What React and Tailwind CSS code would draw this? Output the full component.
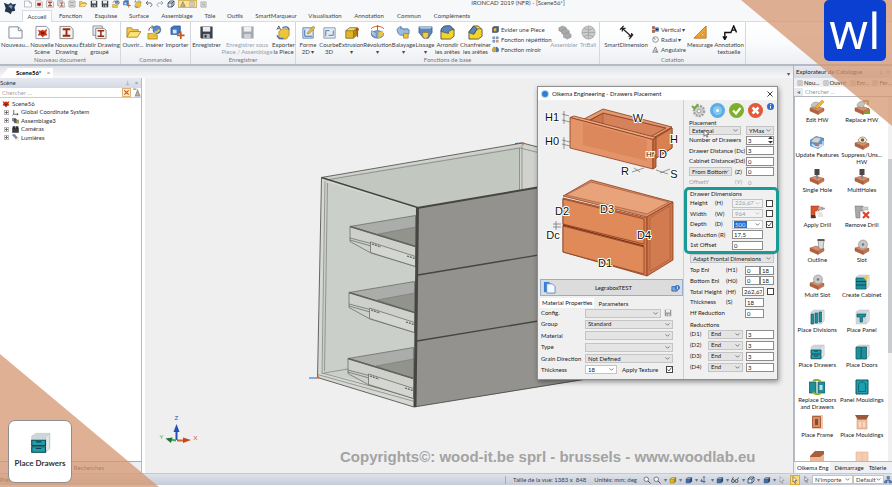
import React, { useState } from 'react';
import clsx from 'clsx';

// ─── Ribbon data ───
const TABS = [
  { name: 'Accueil', w: 'w-[30px]' },
  { name: 'Fonction', w: 'w-[37px]' },
  { name: 'Esquisse', w: 'w-[34px]' },
  { name: 'Surface', w: 'w-[32px]' },
  { name: 'Assemblage', w: 'w-[44px]' },
  { name: 'Tôle', w: 'w-[22px]' },
  { name: 'Outils', w: 'w-[28px]' },
  { name: 'SmartMarqueur', w: 'w-[54px]' },
  { name: 'Visualisation', w: 'w-[44px]' },
  { name: 'Annotation', w: 'w-[44px]' },
  { name: 'Commun', w: 'w-[36px]' },
  { name: 'Compléments', w: 'w-[50px]' },
];

const GROUPS = [
  {
    title: 'Nouveau document',
    w: 'w-[121px]',
    items: [
      { icon: 'page', lines: ['Nouveau...'], w: 'w-[30px]' },
      { icon: 'scene', lines: ['Nouvelle', 'Scène'], w: 'w-[24px]' },
      { icon: 'beam', lines: ['Nouveau', 'Drawing'], w: 'w-[25px]' },
      { icon: 'beams', lines: ['Établir Drawing', 'groupé'], w: 'w-[41px]' },
    ],
  },
  {
    title: 'Commandes',
    w: 'w-[70px]',
    items: [
      { icon: 'folder', lines: ['Ouvrir...'], w: 'w-[24px]' },
      { icon: 'insert', lines: ['Insérer'], w: 'w-[19px]' },
      { icon: 'import', lines: ['Importer'], w: 'w-[26px]' },
    ],
  },
  {
    title: 'Enregistrer',
    w: 'w-[105px]',
    items: [
      { icon: 'save', lines: ['Enregistrer'], w: 'w-[31px]' },
      { icon: 'saveOff', lines: ['Enregistrer sous', 'Piece / Assemblage'], w: 'w-[50px]', off: true },
      { icon: 'export', lines: ['Exporter', 'la Piece'], w: 'w-[23px]' },
    ],
  },
  {
    title: 'Fonctions de base',
    w: 'w-[304px]',
    items: [
      { icon: 'sketch', lines: ['Forme', '2D ▾'], w: 'w-[24px]' },
      { icon: 'curve', lines: ['Courbe', '3D'], w: 'w-[18px]' },
      { icon: 'extrude', lines: ['Extrusion', '▾'], w: 'w-[26px]' },
      { icon: 'revolve', lines: ['Révolution', '▾'], w: 'w-[27px]' },
      { icon: 'sweep', lines: ['Balayage', '▾'], w: 'w-[25px]' },
      { icon: 'loft', lines: ['Lissage', '▾'], w: 'w-[18px]' },
      { icon: 'fillet', lines: ['Arrondir', 'les arêtes'], w: 'w-[27px]' },
      { icon: 'chamfer', lines: ['Chanfreiner', 'les arêtes'], w: 'w-[29px]' },
      {
        list: [
          ['shell', 'Evider une Piece'],
          ['pattern', 'Fonction répétition'],
          ['mirror', 'Fonction miroir'],
        ],
        w: 'w-[60px]',
        pad: 'pl-[2px]',
      },
      { icon: 'assemble', lines: ['Assembler'], w: 'w-[28px]', off: true },
      { icon: 'triball', lines: ['TriBall'], w: 'w-[20px]', off: true },
    ],
  },
  {
    title: 'Cotation',
    w: 'w-[146px]',
    items: [
      { icon: 'dimension', lines: ['SmartDimension'], w: 'w-[52px]' },
      {
        list: [
          ['vertical', 'Vertical  ▾'],
          ['radial', 'Radial ▾'],
          ['angle', 'Angulaire'],
        ],
        w: 'w-[34px]',
        pad: 'pl-0',
      },
      { icon: 'ruler', lines: ['Mesurage'], w: 'w-[28px]' },
      { icon: 'note', lines: ['Annotation', 'textuelle'], w: 'w-[30px]' },
    ],
  },
];

// ─── Catalogue data ───
const CATALOG = [
  ['editHw', 'Edit HW'],
  ['replaceHw', 'Replace HW'],
  ['update', 'Update Features'],
  ['suppress', 'Suppress/Uns...', 'HW'],
  ['hole', 'Single Hole'],
  ['hole', 'MultiHoles'],
  ['drill', 'Apply Drill'],
  ['drillOff', 'Remove Drill'],
  ['outline', 'Outline'],
  ['slot', 'Slot'],
  ['slot', 'Multi Slot'],
  ['cabinet', 'Create Cabinet'],
  ['divisions', 'Place Divisions'],
  ['panel', 'Place Panel'],
  ['drawers', 'Place Drawers'],
  ['doors', 'Place Doors'],
  ['replaceDoors', 'Replace Doors', 'and Drawers'],
  ['mouldPanel', 'Panel Mouldings'],
  ['frame', 'Place Frame'],
  ['mouldings', 'Place Mouldings'],
  ['worktop', ''],
  ['plain', ''],
];

const TREE = [
  ['axes', 'Global Coordinate System'],
  ['parts', 'Assemblage3'],
  ['camera', 'Caméras'],
  ['light', 'Lumières'],
];

// ─── Icon drawings, all on a 16x16 grid ───
const Board = () => (
  <g stroke="#8a4a2c" strokeWidth=".4">
    <path d="M1 9 7 7l8 2.500-6 3z" fill="#d98e68" />
    <path d="M1 9v3l8 3.500v-3z" fill="#b5633f" />
    <path d="M9 12.500v3l6-3.500V9.500z" fill="#c87650" />
  </g>
);

const Box = ({ fill = '#e3b526', side = '#b8860b', top = '#f6dc68' }) => (
  <g stroke="#6a5a20" strokeWidth=".5">
    <path d="M2 6 6 3h8v8l-4 3H2z" fill={side} />
    <path d="M2 6h8v8H2z" fill={fill} />
    <path d="M2 6 6 3h8l-4 3z" fill={top} />
  </g>
);

const Carcass = () => (
  <g stroke="#b9c2c4" strokeWidth=".5">
    <path d="M2 3 5 1h10v11l-3 3H2z" fill="#cdd6d8" />
    <path d="M12 3.500V15l3-3V1z" fill="#dfe5e6" />
  </g>
);

const ICONS = {
  page: <path d="M1 2h10l4 4v8H1zM11 2v4h4" fill="#fbfcfe" stroke="#7e8794" />,
  scene: (
    <>
      <path d="M1 1.500h11l3 3v10H1z" fill="#fbfcfe" stroke="#8c93a0" />
      <path d="m3 5 3 1 2-1 2 1 3-2-1 4 1 3-3 .5L8 13l-2-2-3 .5L4.500 8z" fill="#cf3518" />
      <path d="m6 6 2 2 2-1v3H7z" fill="#7a1c10" />
    </>
  ),
  spider: (
    <>
      <path d="m1 2 4 2 3-1 3 1 4-2-2 5 2 4-4 .5L8 15l-3-3.500-4-.5 2-4z" fill="#cf3518" />
      <path d="m5 6 3 2 3-2-1 5H6z" fill="#7a1c10" />
    </>
  ),
  beam: (
    <>
      <path d="M1 1.500h11l3 3v10H1z" fill="#f4f1ee" stroke="#8c8580" />
      <path d="M4 4.500h8M4 11.500h8M8 5v6" stroke="#9a2a18" strokeWidth="2" />
    </>
  ),
  beams: (
    <>
      <path d="M1 1h10v10H1z" fill="#e8eaee" stroke="#8c93a0" />
      <path d="M4 3.500h9l2 2v9H4z" fill="#f8f6f4" stroke="#8c8580" />
      <path d="M6 6h7M6 12h7M9.500 6.500v5" stroke="#9a2a18" strokeWidth="1.600" />
    </>
  ),
  folder: (
    <>
      <path d="M1 13V3h5l1 2h6v3" fill="#f2cc52" stroke="#9a7a1c" strokeWidth=".8" />
      <path d="M1 13 4 7h12l-4 6z" fill="#ffe07a" stroke="#9a7a1c" strokeWidth=".8" />
    </>
  ),
  insert: (
    <>
      <circle cx="10.500" cy="5" r="4.200" fill="#5a88c4" stroke="#345a8c" strokeWidth=".6" />
      <path d="M1 9h5l2 1.500h3V15H1z" fill="#f0c33c" stroke="#8a6a10" strokeWidth=".6" />
      <path d="M2 6c0-3 2-4 4-4M5 .5 7 2 5 4" fill="none" stroke="#4a4f58" />
      <path d="M8 8c2 0 4-1 5-3" stroke="#f0c33c" strokeWidth="2" fill="none" />
    </>
  ),
  import: (
    <>
      <path d="M1 3 4 1h7v7l-3 2H1z" fill="#3d78c4" stroke="#1e4a88" strokeWidth=".7" />
      <path d="M3 5h4v4H3z" fill="#d4e4f6" />
      <path d="M11.500 7v8M7.500 11h8" stroke="#c4561e" strokeWidth="1.800" />
    </>
  ),
  save: (
    <>
      <path d="M1.500 1.500h13v13h-12l-1-1z" fill="#3c4148" />
      <path d="M4 2h8v5H4z" fill="#e9edf2" />
      <path d="M4.500 9.500h7v5h-7z" fill="#aab2bc" />
      <path d="M6 10.500h2v3H6z" fill="#30343a" />
    </>
  ),
  saveOff: (
    <>
      <path d="M1.500 1.500h13v13h-12l-1-1z" fill="#a5a9ae" />
      <path d="M4 2h8v5H4z" fill="#eef0f2" />
      <path d="M4.500 9.500h7v5h-7z" fill="#cfd3d7" />
    </>
  ),
  export: (
    <>
      <path d="m3 7 4-3h7v7l-3 4H3z" fill="#f0c33c" stroke="#8a6a10" strokeWidth=".6" />
      <path d="M1 5 3 1l2 4M2 4h2" stroke="#333" fill="none" strokeWidth=".8" />
      <path d="M7 3c3-2 6-1 7 2M1 11c1 3 4 4 7 3" stroke="#3a72c0" strokeWidth="1.400" fill="none" />
    </>
  ),
  sketch: (
    <>
      <path d="M2 3h11v11H2z" fill="#dbe9f7" stroke="#5c82b0" />
      <path d="M4 12h8M4 12V5" stroke="#3f6aa0" />
      <path d="m7 8 6-7 2 2-6 6-2 .5z" fill="#eab83a" stroke="#8a6a10" strokeWidth=".5" />
    </>
  ),
  curve: (
    <>
      <path d="M2 3h12v11H2z" fill="#e4ebf3" stroke="#8b9bb0" />
      <path d="M4 12V6h4M7 11h5V6" stroke="#4a78b0" fill="none" />
    </>
  ),
  extrude: (
    <>
      <Box />
      <path d="M14.500 13V4m-1.500 2 1.500-3L16 6" stroke="#b03a18" fill="none" />
    </>
  ),
  revolve: (
    <>
      <ellipse cx="8" cy="10" rx="6.500" ry="4" fill="#7fa6d4" stroke="#41658e" strokeWidth=".7" />
      <path d="M1.500 6v4l5 3.500V8z" fill="#a8c4e4" stroke="#41658e" strokeWidth=".5" />
      <path d="M9 8v6l5-3V6z" fill="#f0c33c" />
      <path d="M1 4c4-3.500 10-3.500 14 0M8 0v6" stroke="#c4561e" fill="none" />
    </>
  ),
  sweep: (
    <>
      <path d="M1 5c2-4 5-4 7 0h6v4l-3 2H6c-3 0-4-2-5-6z" fill="#9bbce0" stroke="#41658e" strokeWidth=".7" />
      <path d="M8 9h5v5H8z" fill="#f0c33c" stroke="#8a6a10" strokeWidth=".6" />
      <path d="M5 1v3h8" stroke="#6a8cb4" fill="none" />
    </>
  ),
  loft: (
    <>
      <path d="M1 2h14v6l-4 6H6L1 8z" fill="#5b86bc" stroke="#2d4f7c" strokeWidth=".7" />
      <path d="M1 2h14l-2 2H3z" fill="#a8c4e4" />
      <path d="M5 8h6v4l-3 3-3-3z" fill="#f4cf3c" stroke="#8a6a10" strokeWidth=".5" />
    </>
  ),
  fillet: (
    <>
      <path d="M1 7c0-4 3-6 6-6h4l4 4v7l-4 3H1z" fill="#f6d32c" stroke="#3a3a30" strokeWidth=".8" />
      <path d="M1 7c0-4 3-6 6-6h4l4 4c-3 0-6 1-6 4z" fill="#5b86bc" stroke="#2b3a4c" strokeWidth=".6" />
    </>
  ),
  chamfer: (
    <>
      <path d="M1 7 6 1h5l4 4v7l-4 3H1z" fill="#f6d32c" stroke="#3a3a30" strokeWidth=".8" />
      <path d="M1 8 6 1l4 3-4 6z" fill="#5b86bc" stroke="#2b3a4c" strokeWidth=".6" />
      <path d="m6 10 4-6h5" stroke="#3a3a30" strokeWidth=".5" fill="none" />
    </>
  ),
  shell: (
    <>
      <path d="M1 4 4 1h11v11l-3 3H1z" fill="#3d5f8c" stroke="#1c2c44" />
      <path d="M4 5h6v7H4z" fill="#e8b53a" />
    </>
  ),
  pattern: (
    <g fill="#dce8f6" stroke="#34629c" strokeWidth="1.500">
      <path d="M2 2h4v4H2zM10 2h4v4h-4zM2 10h4v4H2z" />
      <path d="M10 10h4v4h-4z" stroke="#b05a28" />
    </g>
  ),
  mirror: (
    <>
      <path d="M1 7 4 3h3v10H4L1 12z" fill="#e8b53a" stroke="#6a5210" />
      <path d="M15 7 12 3H9v10h3l3-1z" fill="#4e7cb8" stroke="#24446c" />
    </>
  ),
  assemble: (
    <g fill="#a9a9a9" stroke="#8c8c8c" strokeWidth=".6">
      <path d="m2 3 4-2 4 2v3l-4 2-4-2z" />
      <path d="m5 6 4-2 4 2v3l-4 2-4-2z" />
      <path d="m7 10 4-2 4 2v3l-4 2-4-2z" />
    </g>
  ),
  triball: (
    <>
      <circle cx="8" cy="8" r="7" fill="#c9c9c9" stroke="#a6a6a6" strokeWidth=".8" />
      <path d="M8 1v14M1 8h14M3 3c3 3 7 3 10 0M3 13c3-3 7-3 10 0" stroke="#9c9c9c" strokeWidth=".7" fill="none" />
    </>
  ),
  dimension: (
    <path d="m1 5 4-4M11 15l4-5M4 4l9 8M3.500 7V3.500H7M13.500 8.500V12H10" stroke="#222" fill="none" strokeWidth="1.300" />
  ),
  vertical: (
    <>
      <path d="M1 1h5v5H1zM1 9h5v6H1z" fill="#c8623a" stroke="#6c2c14" />
      <path d="M8 4h7v8H8z" fill="#5b86bc" stroke="#24446c" />
      <path d="M9 8h5" stroke="#111" strokeWidth="2" />
    </>
  ),
  radial: (
    <>
      <circle cx="8" cy="8" r="6.500" fill="#f4f4f4" stroke="#555" strokeWidth="1.300" />
      <path d="M8 8 3 4" stroke="#444" strokeWidth="1.500" />
    </>
  ),
  angle: <path d="M1 14h13M2 14 8 2l5 12M5 9c3-1 4 1 5 5" stroke="#444" strokeWidth="1.300" fill="none" />,
  ruler: (
    <>
      <path d="M1 14 14 1v13z" fill="#f2a52c" stroke="#a0601c" strokeWidth=".8" />
      <path d="M8 11.500 11.500 8v3.500z" fill="#fff6e4" stroke="#a0601c" strokeWidth=".6" />
    </>
  ),
  note: (
    <>
      <path d="M3 15V8h7M1 12l2 3.500L5 12" stroke="#111" fill="none" strokeWidth="1.500" />
      <path d="m9.500 8 3-7 3 7M10.500 5.500h4" stroke="#111" fill="none" strokeWidth="1.500" />
    </>
  ),
  editHw: (
    <>
      <Board />
      <path d="M2 7c1-4 5-5 8-3l-3 5z" fill="#c6c2bc" stroke="#777" strokeWidth=".4" />
      <path d="m7 7 6-6 2 2-6 6-2.500.5z" fill="#f0b53a" stroke="#9a6a10" strokeWidth=".4" />
    </>
  ),
  replaceHw: (
    <>
      <Board />
      <path d="M3 7c0-4 5-6 8-3l-2 5z" fill="#c6c2bc" stroke="#777" strokeWidth=".4" />
      <path d="M9 2h5v4M15 10v4h-5" stroke="#7da02e" strokeWidth="2" fill="none" />
    </>
  ),
  update: (
    <>
      <path d="M1 6 7 2l8 2v7l-6 4-8-3z" fill="#5e93cf" />
      <path d="M2 8c2-5 7-6 10-3l-3 4z" fill="#d5d3cf" stroke="#777" strokeWidth=".4" />
      <path d="M3 10c3 4 8 4 11 0M14 7v4h-4" stroke="#cfe2f6" strokeWidth="1.300" fill="none" />
      <path d="m6 9 4 1-3 2z" fill="#c87650" />
    </>
  ),
  suppress: (
    <>
      <Board />
      <path d="M4 6c2-4 7-4 9 0-2 4-7 4-9 0z" fill="#f2efe6" stroke="#8c7a4c" strokeWidth=".7" />
      <circle cx="8.500" cy="6" r="1.800" fill="#7a5a34" />
    </>
  ),
  hole: (
    <>
      <Board />
      <path d="M5.500 0h5v6h-5z" fill="#4a4644" />
      <path d="M7 6h2v4H7z" fill="#8c8886" />
    </>
  ),
  drill: (
    <>
      <path d="M2 2h8v5H6v7H2z" fill="#e0542c" stroke="#8a2c14" strokeWidth=".5" />
      <path d="M9 3h5v3H9zM13 4h3v1h-3z" fill="#b8b8b8" stroke="#777" strokeWidth=".3" />
      <path d="M2 11h4l1 3H2z" fill="#403c3a" />
      <path d="m8 6 6 3v4H9z" fill="#e8e4e0" />
    </>
  ),
  drillOff: (
    <>
      <path d="M1 2h8v5H6v7H2z" fill="#a8a8a8" stroke="#6c6c6c" strokeWidth=".5" />
      <path d="M8 3h6v3H8z" fill="#cfcfcf" stroke="#777" strokeWidth=".3" />
      <path d="m9 8 6 6M15 8l-6 6" stroke="#d9442c" strokeWidth="2.200" />
    </>
  ),
  outline: (
    <>
      <Board />
      <path d="M9 1h6l-1 9h-4z" fill="#dcdcdc" stroke="#6e6e6e" strokeWidth=".6" />
      <path d="M8.500 0h7v2h-7z" fill="#5a5a5a" />
    </>
  ),
  slot: (
    <>
      <Board />
      <circle cx="9" cy="5.500" r="4.500" fill="#c9c9c9" stroke="#8a8a8a" strokeWidth=".6" />
      <circle cx="9" cy="5.500" r="1.300" fill="#777" />
    </>
  ),
  cabinet: (
    <>
      <Carcass />
      <path d="M2 4h10v11H2z" fill="#1f8f9a" stroke="#0e5660" strokeWidth=".7" />
      <path d="M2 7.500h10M2 11h10" stroke="#0c4852" />
      <path d="m12 1 1 2 2 1-2 1-1 2-1-2-2-1 2-1z" fill="#f2c83a" />
    </>
  ),
  divisions: (
    <>
      <Carcass />
      <path d="M2 5h2.500v10H2zM6 4h2.500v10H6zM10 3h2.500v10H10z" fill="#1f8f9a" stroke="#0e5660" strokeWidth=".6" />
    </>
  ),
  panel: (
    <>
      <Carcass />
      <path d="M3 5h9l-1 3H8.500v5H6V8H3z" fill="#1f8f9a" stroke="#0e5660" strokeWidth=".6" />
    </>
  ),
  drawers: (
    <>
      <Carcass />
      <path d="M2 6h10v3.800H2zM2 10.700h10v4H2z" fill="#1c9fae" stroke="#0c4852" strokeWidth=".8" />
      <path d="M5 7.200h4M5 12h4" stroke="#0c4852" strokeWidth=".8" />
    </>
  ),
  doors: (
    <>
      <Carcass />
      <path d="M2 3h5v12H2zM7.500 3h5v12h-5z" fill="#1f8f9a" stroke="#0e5660" strokeWidth=".7" />
    </>
  ),
  replaceDoors: (
    <>
      <path d="M0 3h7v11H0zM9 3h7v11H9z" fill="#1f8f9a" stroke="#0e5660" strokeWidth=".7" />
      <path d="M10.500 6h3v5h-3z" fill="#bfe0e4" />
      <path d="M4 2c3-2 6-1 8 1M12 14c-3 2-6 1-8-1" stroke="#8ab02e" strokeWidth="2" fill="none" />
    </>
  ),
  mouldPanel: (
    <>
      <path d="M2 1h12v14H2z" fill="#1c9fae" stroke="#0e5660" />
      <path d="M4.500 12.500V6c0-4 7-4 7 0v6.500z" fill="none" stroke="#0c6672" strokeWidth=".9" />
    </>
  ),
  frame: (
    <>
      <path d="M3 1h11v14H3z" fill="#f0c9ae" />
      <path d="M3.500 2.500h8v11h-8z" fill="#d98e68" stroke="#a8603c" />
      <path d="M6 5h3v6H6z" fill="#8a4a2c" />
    </>
  ),
  mouldings: (
    <>
      <path d="M3 5h10v10H3z" fill="#f0c0a0" stroke="#c88c68" strokeWidth=".5" />
      <path d="M1 1h14l-2.500 4.500h-9z" fill="#9a5a3a" />
      <path d="M5 8h2v5H5zM9 8h2v5H9z" fill="#f8dcc8" />
    </>
  ),
  worktop: (
    <>
      <path d="M1 7 6 2h9v4l-4 3H1z" fill="#a8603c" />
      <path d="M1 8h10l4-3v10H1z" fill="#eeb898" />
    </>
  ),
  plain: <path d="M2 3h12v12H2zM8 3v12" fill="#f4ccb0" stroke="#e4b090" strokeWidth=".6" />,
  axes: <path d="M4 2v10h10M4 12l-3 3M11 10l3 2-3 2" stroke="#333" fill="none" strokeWidth="1.600" />,
  parts: (
    <>
      <path d="M1 3h7v6H1z" fill="#9a9a90" stroke="#444" />
      <path d="M5 5h5v8H5z" fill="#3e6ca8" stroke="#222" />
      <path d="M10 7h5v7h-5z" fill="#c8a83a" stroke="#555" />
    </>
  ),
  camera: <path d="M1 5h14v10H1zM2 1h5v4H2zM9 1h5v4H9z" fill="#3c3c3c" stroke="#222" />,
  light: (
    <>
      <path d="m1 2 5-1 6 7-3 3z" fill="#7890b8" stroke="#3a4a6c" />
      <path d="m11 10 4 5M9 12v3M13 9h3" stroke="#c89a3a" />
    </>
  ),
  ironcad: (
    <>
      <path d="m1 2 5 2 3-2 2 2 4-1-2 4 1 4-4 1-1 3-3-2-4-1 1-4z" fill="#22344e" />
      <path d="m6 6 3-2 2 2-1 3z" fill="#7d95b4" />
    </>
  ),
  glass: (
    <>
      <circle cx="6.500" cy="6.500" r="4.500" fill="#f4f8fc" stroke="#555" strokeWidth="1.500" />
      <path d="m10 10 5 5" stroke="#555" strokeWidth="2" />
    </>
  ),
  blueBox: <Box fill="#3b6cb4" side="#244a84" top="#8fb2e0" />,
  goldBox: <Box />,
  wireBox: <path d="M2 6 6 2h8v8l-4 4H2zM2 6h8v8M10 6l4-4" stroke="#2c3c54" strokeWidth="1.600" fill="#dbe4f0" />,
  move: <path d="M8 1v14M3 6v5h8M1 9l2 2.500L5 9M6 3l2-2 2 2" stroke="#3a587e" strokeWidth="1.500" fill="none" />,
  specs: (
    <g stroke="#333" strokeWidth="1.500" fill="none">
      <circle cx="4" cy="10" r="3" />
      <circle cx="11" cy="10" r="3" />
      <path d="m2 7 3-5M13 7l2-4" />
    </g>
  ),
  cursor: <path d="m4 1 8 8H8l2 5-2 1-2-5-2 2z" fill="#fff" stroke="#444" strokeWidth="1.200" />,
  net: <path d="M6 1h5v4H6zM1 10h5v4H1zM10 10h5v4h-5zM8.500 5v3M3.500 10V8h9v2" stroke="#34507c" fill="#6c90c8" />,
  undo: <path d="M3 6h7c5 0 5 7 0 7M6 2 2 6l4 4" stroke="#666f7a" strokeWidth="2" fill="none" />,
  redo: <path d="M13 6H6c-5 0-5 7 0 7M10 2l4 4-4 4" stroke="#a4aab2" strokeWidth="2" fill="none" />,
  list: <path d="M2 2h12v12H2zM4 5h8M4 8h8M4 11h8" stroke="#666" fill="#f4f4f4" />,
};

const Icon = ({ name, className = 'h-3.5 w-3.5' }) => (
  <svg viewBox="0 0 16 16" className={clsx('shrink-0', className)} fill="none" aria-hidden="true">
    {ICONS[name]}
  </svg>
);

// ─── Form controls ───
const Select = ({ label, value, className, disabled, selected, light }) => (
  <div className={clsx('relative h-[9px] shrink-0', className)}>
    <select
      aria-label={label}
      disabled={disabled}
      className={clsx(
        'block h-full w-full appearance-none border border-[#c4c4c4] pl-[2px] leading-none outline-none',
        disabled && 'bg-[#f2f2f2] text-gray-400',
        selected && 'bg-white text-[#2a6fd0]',
        light && 'bg-white',
        !disabled && !selected && !light && 'bg-[#e4e4e4]',
      )}
    >
      <option>{value}</option>
    </select>
    {selected && (
      <span className="pointer-events-none absolute top-px bottom-px left-[2px] bg-[#2a6fd0] px-px leading-[7px] text-[#cfe2ff]">
        {value}
      </span>
    )}
    <svg viewBox="0 0 6 4" className="pointer-events-none absolute top-[3px] right-[3px] h-[3px] w-[5px]" fill="none">
      <path d="m.5.5 2.500 2.500L5.500.5" stroke={disabled ? '#bbb' : '#555'} />
    </svg>
  </div>
);

const Field = ({ label, value, className, flat }) => (
  <input
    aria-label={label}
    defaultValue={value}
    className={clsx(
      'h-[9px] shrink-0 border px-px leading-none outline-none',
      flat ? 'border-transparent bg-transparent text-gray-400' : 'border-[#8c8c8c] bg-white',
      className,
    )}
  />
);

const Check = ({ label, checked }) => (
  <span className="relative ml-[3px] h-[7px] w-[7px] shrink-0">
    <input
      type="checkbox"
      aria-label={label}
      defaultChecked={checked}
      className="peer block h-full w-full appearance-none border border-[#444] bg-white"
    />
    <svg viewBox="0 0 7 7" className="pointer-events-none absolute inset-0 hidden peer-checked:block" fill="none">
      <path d="m1.500 3.500 1.500 1.500 2.500-3.500" stroke="#333" strokeWidth=".8" />
    </svg>
  </span>
);

// One line of the right hand column: name, symbol, then its control
const Row = ({ name, symbol, nameW = 'w-[36px]', off, children }) => (
  <div className={clsx('flex h-[10px] items-center whitespace-nowrap', off && 'text-gray-400')}>
    <span className={clsx('shrink-0', nameW)}>{name}</span>
    <span className={clsx('min-w-0 flex-1', nameW === 'w-auto' && 'pr-px text-right')}>{symbol}</span>
    {children}
  </div>
);

// ─── Ribbon ───
const RibbonItem = ({ item }) => {
  if (item.list) {
    return (
      <div className={clsx('flex shrink-0 flex-col gap-px pt-[2px]', item.w, item.pad)}>
        {item.list.map(([icon, text]) => (
          <button key={text} className="flex h-[9px] items-center gap-[2px] whitespace-nowrap">
            <Icon name={icon} className="h-[7px] w-[7px]" />
            {text}
          </button>
        ))}
      </div>
    );
  }
  return (
    <button className={clsx('flex shrink-0 flex-col items-center pt-[2px] leading-[7px]', item.w, item.off && 'text-gray-400')}>
      <Icon name={item.icon} className="mb-px h-[15px] w-[15px]" />
      {item.lines.map((line) => (
        <span key={line} className="whitespace-nowrap">{line}</span>
      ))}
    </button>
  );
};

const QAT = ['page', 'scene', 'beam', 'beams', 'list', 'folder', 'save', 'save', 'insert', 'import', 'export', 'undo', 'redo', 'wireBox'];

const Ribbon = () => {
  const [active, setActive] = useState('Accueil');
  return (
    <header className="shrink-0 bg-[#f7f8f9] text-[#444]">
      <div className="flex h-[10px] items-start">
        <div className="flex w-[200px] items-center gap-[3px] pl-[24px]">
          {QAT.map((name, i) => (
            <Icon key={i} name={name} className="-mt-px h-[8px] w-[8px]" />
          ))}
          <span className="flex gap-[3px] border border-[#d8b85c] bg-[#fbe19a] px-px">
            <Icon name="angle" className="h-[6px] w-[6px]" />
            <Icon name="list" className="h-[6px] w-[6px]" />
          </span>
          <Icon name="list" className="h-[7px] w-[7px]" />
        </div>
        <h1 className="flex-1 pr-[56px] text-center leading-[6px]">IRONCAD 2019 (NFR) - [Scene56*]</h1>
      </div>
      <nav className="flex h-3 items-stretch border-b border-[#d9dce0]">
        <div className="w-[22px]">
          <Icon name="ironcad" className="-mt-[9px] ml-[3px] h-[14px] w-[14px]" />
        </div>
        {TABS.map((tab) => (
          <button
            key={tab.name}
            onClick={() => setActive(tab.name)}
            className={clsx(
              'shrink-0 text-center whitespace-nowrap',
              tab.w,
              active === tab.name && '-mb-px border-x border-t border-[#d9dce0] bg-white',
            )}
          >
            {tab.name}
          </button>
        ))}
      </nav>
      <div className="flex h-[44px] border-b-2 border-[#b4bac4] bg-gradient-to-b from-white via-[#fafbfc] to-[#eceef2]">
        {GROUPS.map((group) => (
          <section key={group.title} className={clsx('flex shrink-0 flex-col border-r border-[#d4d8de] pt-px', group.w)}>
            <div className="flex min-h-0 flex-1 items-start">
              {group.items.map((item, i) => (
                <RibbonItem key={i} item={item} />
              ))}
            </div>
            <h2 className="shrink-0 pb-px text-center leading-[7px] text-[#777]">{group.title}</h2>
          </section>
        ))}
      </div>
    </header>
  );
};

// ─── Scene browser ───
const ScenePanel = () => (
  <aside className="flex w-[142px] shrink-0 flex-col border-r border-[#b4b8c0] bg-[#eef0f4] text-[#333]">
    <div className="flex h-[10px] items-center bg-gradient-to-b from-[#e6e9f0] to-[#d3d9e5]">
      <h2 className="flex-1">Scène</h2>
      <button aria-label="Épingler" className="w-[9px] text-gray-500">⊥</button>
      <button aria-label="Fermer la scène" className="w-[9px] text-gray-500">×</button>
    </div>
    <div className="flex h-[10px] items-center gap-px border-b border-[#ccc] bg-white">
      <input placeholder="Chercher ..." aria-label="Chercher dans la scène" className="h-full min-w-0 flex-1 px-[2px] outline-none" />
      <button aria-label="Effacer" className="h-[9px] w-[9px] border border-[#e0b070] bg-[#fdebc8]">
        <svg viewBox="0 0 8 8" fill="none"><path d="m1.500 1.500 5 5m0-5-5 5" stroke="#c4561e" strokeWidth="1.300" /></svg>
      </button>
      <button aria-label="Filtrer" className="h-[9px] w-[9px]">
        <svg viewBox="0 0 8 8" fill="none"><path d="M1 1h3M3 7l2-5 2 5z" stroke="#8a97a8" fill="#d5b65c" /></svg>
      </button>
    </div>
    <div className="flex flex-1 flex-col border-b border-[#aab] bg-white pt-px">
      <div className="flex h-[9px] items-center gap-[2px] pl-[2px]">
        <Icon name="spider" className="h-[8px] w-[8px]" />
        Scene56
      </div>
      <ul className="flex h-[34px] flex-col justify-between">
        {TREE.map(([icon, name]) => (
          <li key={name} className="flex h-[8px] items-center pl-[4px]">
            <button aria-label={'Ouvrir ' + name} className="mr-[3px] grid h-[5px] w-[5px] place-items-center border border-[#bbb] leading-none text-gray-500">
              <svg viewBox="0 0 3 3" className="h-[3px] w-[3px]"><path d="M0 1.500h3M1.500 0v3" stroke="#555" strokeWidth=".8" /></svg>
            </button>
            <Icon name={icon} className="mr-[2px] h-[7px] w-[7px]" />
            {name}
          </li>
        ))}
      </ul>
    </div>
    <div className="flex h-[11px] items-center justify-end gap-[2px] pr-[37px]">
      <Icon name="glass" className="h-[6px] w-[6px]" />
      Recherches
    </div>
  </aside>
);

// ─── 3D view ───
const DrawerBox = ({ dx, dy }) => (
  <g transform={`translate(${dx} ${dy})`} stroke="#62635f" strokeWidth=".7" fill="none">
    <path d="m350 226.500 65.500-11V247z" fill="#abadaa" />
    <path d="m378 234 37.500-7v20z" fill="#93938e" strokeWidth=".4" />
    <path d="m350 226.500 65.500 20v20L371 253l-21-11.500z" fill="#cdd0cb" />
    <path d="m350 226.500 65.500 20" strokeWidth="1.600" />
    <path d="m350 238 21 5.500M350 240l21 6" />
    <path d="m370.500 242 45 14.500v10l-45-14z" fill="#d3d6d1" />
    <path d="m372 244 9 3M407 256l8 2.500" strokeWidth="1.300" strokeDasharray="2 1" />
  </g>
);

const Viewport = () => (
  <svg className="absolute inset-0 h-full w-full" aria-label="Vue 3D">
    <g transform="translate(-145 -78)">
      <path d="m321.500 177.500 201-34.500 80 20v45L417 207l-95.500-29.500" fill="#cfd2cd" />
      <path d="m330 178.500 190-32v43.500L417 207z" fill="#c2c7c0" />
      <path d="m321.500 177.500 96 30L414 407l-96.500-29.500z" fill="#d5d8d3" />
      <path d="m326 182 91.500 27v183L322.500 373z" fill="#cbcfc9" />
      <g fill="none" stroke="#7b7c78" strokeWidth=".7">
        <path d="m325 181-3 193M327.500 183l-3 188M324 373l24-4M317.500 374.500l97 27M322 373l93 25" />
        <path d="m326 180 194-32M522 145v44M519.500 148v42M520 148l80 20" />
      </g>
      <DrawerBox dx={0} dy={0} />
      <DrawerBox dx={-1} dy={66} />
      <DrawerBox dx={-2} dy={132} />
      <path d="m418 208 187-32v200.500L414 407z" fill="#93928f" />
      <g fill="none" stroke="#454541">
        <path d="m321.500 177.500 201-34.500 80 21" strokeWidth=".8" />
        <path d="m321.500 177.500-4 200 96.500 29.500 191-31" strokeWidth=".8" />
        <path d="m321.500 177.500 96 30" strokeWidth="1.400" />
        <path d="m418 275 187-31M417 341l188-31" strokeWidth="1.300" />
        <path d="m417 208 188-32" strokeWidth="2" />
        <path d="M417.500 207 415 407" strokeWidth="3" />
      </g>
      <path d="M309 378h8M515 143.500l7-.5" stroke="#2a62c8" />
      <circle cx="318" cy="377.500" r="1.300" fill="#d9662a" />
      <circle cx="523" cy="143.500" r="1.300" fill="#d9662a" />
      {/* axis triad */}
      <path d="M176.500 440v-9" stroke="#2450b4" strokeWidth="2" />
      <path d="m173.500 432 3-8 3 8z" fill="#2450b4" />
      <path d="M177 440.500h7" stroke="#d4622c" strokeWidth="2" />
      <path d="m183 437.500 8 2.500-8 3z" fill="#c04a1c" />
      <path d="M176 440.500l-6-1" stroke="#3cae5c" strokeWidth="2" />
      <path d="m171 443-5.500-4.500 7-1z" fill="#23703a" />
      <text x="174.500" y="420" fontSize="6" fill="#2450b4">Z</text>
      <text x="193.500" y="440" fontSize="6" fill="#d4622c">X</text>
      <text x="159.500" y="438.500" fontSize="6" fill="#3cae5c">Y</text>
    </g>
  </svg>
);

// ─── Dialog illustrations ───
const MARKS = [
  [552, 121, 'H1'], [552, 145, 'H0'], [638, 122, 'W'], [674, 143, 'H'], [663, 158, 'D'],
  [625, 175, 'R'], [674, 178, 'S'], [562, 215, 'D2'], [607, 213, 'D3'], [644, 239, 'D4'],
  [553, 239, 'Dc'], [605, 267, 'D1'],
];

const Illustration = () => (
  <svg viewBox="540 100 143 179" className="h-[179px] w-[143px]" aria-label="Dimensions du tiroir">
    <g stroke="#8c3f20" strokeWidth=".8" strokeLinejoin="round">
      <path d="m586 119 17-9 69 18v20l-19 12-67-20z" fill="#d07c54" />
      <path d="m603 113 66 16-16 9-64-17z" fill="#cb764c" />
      <path d="M603 113v12l50 13 16-9z" fill="#d5825a" strokeWidth=".4" />
      <path d="m584 119 19-10 69 18-19 11-3-1 16-9-63-15-15 8z" fill="#e39a70" />
      <path d="M653 139.500 672 128v20l-19 12z" fill="#d8804f" />
      <path d="m570 117.500 4-1.500 82 21.500-3 2z" fill="#eba880" />
      <path d="m570 117.500 83 22V169l-83-21z" fill="#e39468" />
      <path d="m653 139.500 3-2V167l-3 2z" fill="#c46c42" />
    </g>
    <path d="m583 123 64 17v21l-64-16z" fill="#dc875c" />
    <g stroke="#8c3f20" strokeWidth=".8" strokeLinejoin="round">
      <path d="m563 196 28-16 82 22-26 15z" fill="#dd9068" />
      <path d="m566 195 25-13 78 20-22 12z" fill="#e8a37b" strokeWidth=".5" />
      <path d="m563 198 84 20v58l-84-24z" fill="#d97e50" />
      <path d="m647 217 26-15v58l-26 16z" fill="#cc744a" />
      <path d="m650 218 20-12v53l-20 12z" fill="#d27a50" strokeWidth=".3" />
      <path d="m563 199 81 20v25l-81-20zM563 226l81 21v27l-81-22z" fill="#e08a5a" />
      <path d="m563 225 81 21" stroke="#6e2e14" strokeWidth="1.200" />
    </g>
    <g stroke="#555" strokeWidth=".6" fill="none">
      <path d="m562 114 7 2M562 120l8 2M564 111v13M562 140l8 2M562 144l8 2M564 137v12M632 172l12-4M634 168l6 4M656 170l12 4M660 173l10-4M556 221v9M553 224h8M553 227h8" />
    </g>
    <g fontFamily="Liberation Sans" fontSize="11" fill="#111" textAnchor="middle" stroke="#fff" strokeWidth="2" paintOrder="stroke">
      {MARKS.map(([x, y, t]) => (
        <text key={t} x={x} y={y}>{t}</text>
      ))}
      <text x="650" y="157" fontSize="8">Hf</text>
    </g>
  </svg>
);

const RoundButton = ({ label, className, children }) => (
  <button aria-label={label} className={clsx('grid h-[15px] w-[15px] place-items-center rounded-full', className)}>
    <svg viewBox="0 0 15 15" className="h-[15px] w-[15px]" fill="none">{children}</svg>
  </button>
);

const MATERIAL = [
  ['Group', 'Standard'],
  ['Material', ''],
  ['Type', ''],
  ['Grain Direction', 'Not Defined'],
];

const DialogLeft = () => (
  <div className="flex w-[145px] shrink-0 flex-col pl-[2px]">
    <Illustration />
    <button className="flex h-[17px] items-center border border-[#8fb0d8] bg-[#dcdcdc] px-[2px]">
      <svg viewBox="0 0 14 14" className="h-[13px] w-[13px]" fill="none">
        <path d="M1 1h6v11H1z" fill="#3b7fd4" />
        <path d="M4 3h6l3 3v7H4z" fill="#f4f9ff" stroke="#5b8ccc" />
      </svg>
      <span className="flex-1 text-center">LegraboxTEST</span>
      <svg viewBox="0 0 10 10" className="h-[9px] w-[9px]" fill="none">
        <path d="M1 4h6v5H1z" fill="#7ea4d8" stroke="#3b6cb4" />
        <circle cx="7" cy="5" r="2.800" fill="#2a6fd0" />
        <path d="M7 3.500v3.500" stroke="#fff" />
      </svg>
    </button>
    <div className="flex h-3 items-end">
      <button className="h-[10px] bg-white px-[2px] whitespace-nowrap">Material Properties</button>
      <button className="h-[9px] px-[4px]">Parameters</button>
    </div>
    <div className="flex h-[67px] flex-col justify-between pr-[10px] pl-px">
      <div className="flex h-[10px] items-center">
        <span className="w-[44px] shrink-0">Config.</span>
        <Select label="Config" value="" className="w-[76px]" />
        <Icon name="save" className="ml-[3px] h-[8px] w-[8px] opacity-50" />
      </div>
      {MATERIAL.map(([name, value]) => (
        <div key={name} className="flex h-[10px] items-center">
          <span className="w-[44px] shrink-0 whitespace-nowrap">{name}</span>
          <Select label={name} value={value} className="w-[88px]" />
        </div>
      ))}
      <div className="flex h-[10px] items-center">
        <span className="w-[44px] shrink-0">Thickness</span>
        <Select label="Épaisseur" value="18" light className="w-[32px]" />
        <span className="ml-[5px] flex-1 whitespace-nowrap">Apply Texture</span>
        <Check label="Apply Texture" checked />
      </div>
    </div>
  </div>
);

const DialogRight = () => (
  <div className="flex flex-1 flex-col border-l border-[#cfcfcf] pl-[2px]">
    <div className="flex h-[20px] items-center gap-[4px] pl-[5px]">
      <RoundButton label="Options">
        <circle cx="8" cy="8" r="5" fill="#d8d8d8" stroke="#a2a2a2" strokeWidth="2.500" strokeDasharray="2 1" />
        <circle cx="8" cy="8" r="2" fill="#f4f4f4" stroke="#999" />
        <path d="m1 3 2.500 2.500L7 1" stroke="#6fae2c" strokeWidth="2" />
      </RoundButton>
      <RoundButton label="Aperçu" className="bg-[#5aaee6]">
        <circle cx="7.500" cy="7.500" r="4.500" fill="#86c8f2" />
        <circle cx="7.500" cy="7.500" r="1.500" fill="#fff" />
      </RoundButton>
      <RoundButton label="Valider" className="bg-[#7cb026]">
        <path d="m4 7.500 3 3 4.500-5.500" stroke="#fff" strokeWidth="2.200" />
      </RoundButton>
      <RoundButton label="Annuler" className="bg-[#e2583a]">
        <path d="m4.500 4.500 6 6m0-6-6 6" stroke="#fff" strokeWidth="2.500" />
      </RoundButton>
      <svg viewBox="0 0 7 7" className="mt-[3px] h-[7px] w-[7px] self-start" aria-label="Info">
        <circle cx="3.500" cy="3.500" r="3.500" fill="#2a6fd0" />
        <path d="M3.500 1.200v1M3.500 3v2.500" stroke="#fff" />
      </svg>
    </div>

    <div className="flex flex-col pr-[5px] pl-[3px]">
      <h3 className="h-[6px] leading-[6px]">Placement</h3>
      <div className="relative flex justify-between">
        <Select label="Placement" value="External" className="w-[52px]" />
        <Select label="Côté" value="YMax" className="w-[28px]" />
        <svg viewBox="0 0 8 11" className="absolute top-[3px] left-[14px] h-[9px] w-[7px]">
          <path d="M1 1v8l2-2 1.500 3 1-.5L4.200 6.500H7z" fill="#fff" stroke="#222" strokeWidth=".7" />
        </svg>
      </div>
      <div className="flex h-[52px] flex-col justify-between">
        <Row name="Number of Drawers">
          <input type="number" aria-label="Number of Drawers" defaultValue="3" className="h-[9px] w-[28px] border border-[#8c8c8c] bg-white px-px leading-none [appearance:textfield]" />
          <svg viewBox="0 0 5 8" className="-ml-[6px] h-[8px] w-[5px]"><path d="M0 3 2.500.5 5 3zM0 5l2.500 2.500L5 5z" fill="#333" /></svg>
          <span className="w-px" />
        </Row>
        <Row name="Drawer Distance" symbol="(Dc)" nameW="w-auto"><Field label="Drawer Distance" value="3" className="w-[28px]" /></Row>
        <Row name="Cabinet Distance" symbol="(Dd)" nameW="w-auto"><Field label="Cabinet Distance" value="0" className="w-[28px]" /></Row>
        <div className="flex h-[10px] items-center">
          <Select label="Origine" value="From Bottom" className="w-[43px]" />
          <span className="flex-1 pl-[3px]">(Z)</span>
          <Field label="Z" value="0" className="w-[28px]" />
        </div>
        <Row name="OffsetY" symbol="(Y)" nameW="w-[46px]" off><Field label="OffsetY" value="0" flat className="w-[28px]" /></Row>
      </div>
    </div>

    <fieldset className="-ml-[2px] rounded-[5px] border-[3px] border-[#1a9a94] px-[3px] pb-px">
      <h3 className="h-[8px] leading-[8px]">Drawer Dimensions</h3>
      <div className="flex h-[52px] flex-col justify-between">
        <Row name="Height" symbol="(H)" nameW="w-[25px]"><Select label="Height" value="226,67" disabled className="w-[31px]" /><Check label="Lock height" /></Row>
        <Row name="Width" symbol="(W)" nameW="w-[25px]"><Select label="Width" value="964" disabled className="w-[31px]" /><Check label="Lock width" /></Row>
        <Row name="Depth" symbol="(D)" nameW="w-[25px]"><Select label="Depth" value="500" selected className="w-[31px]" /><Check label="Lock depth" checked /></Row>
        <Row name="Reduction (R)"><Field label="Reduction" value="17,5" className="mr-[10px] w-[31px]" /></Row>
        <Row name="1st Offset"><Field label="1st Offset" value="0" className="mr-[10px] w-[31px]" /></Row>
      </div>
    </fieldset>

    <div className="flex flex-col pr-[5px] pl-[4px]">
      <Select label="Frontal" value="Adapt Frontal Dimensions" className="w-full" />
      <div className="mt-[2px] flex h-[53px] flex-col justify-between">
        <Row name="Top Enl" symbol="(H1)">
          <Field label="Top Enl" value="0" className="w-[15px]" /><Field label="Top Enl max" value="18" className="w-[14px]" />
        </Row>
        <Row name="Bottom Enl" symbol="(H0)">
          <Field label="Bottom Enl" value="0" className="w-[15px]" /><Field label="Bottom Enl max" value="18" className="w-[14px]" />
        </Row>
        <Row name="Total Height" symbol="(Hf)"><Field label="Total Height" value="262,67" className="w-[22px]" /><Check label="Lock total height" /></Row>
        <Row name="Thickness" symbol="(S)"><Field label="Thickness" value="18" className="mr-[10px] w-[19px]" /></Row>
        <Row name="Hf Reduction"><Field label="Hf Reduction" value="0" className="mr-[10px] w-[19px]" /></Row>
      </div>
      <h3 className="mt-[3px] h-[8px] leading-[8px]">Reductions</h3>
      <div className="flex h-[43px] flex-col justify-between">
        {['D1', 'D2', 'D3', 'D4'].map((d) => (
          <div key={d} className="flex h-[10px] items-center">
            <span className="flex-1">({d})</span>
            <Select label={d} value="End" className="mr-[3px] w-[35px]" />
            <Field label={d + ' value'} value="3" className="w-[28px]" />
          </div>
        ))}
      </div>
    </div>
  </div>
);

const DrawersDialog = () => (
  <div role="dialog" aria-label="Drawers Placement" className="absolute top-[8px] left-[392px] z-10 flex h-[294px] w-[241px] flex-col border border-[#8e8e8e] bg-[#f0f0f0] text-[#222] shadow-[1px_2px_5px_rgba(0,0,0,0.4)]">
    <div className="flex h-[13px] shrink-0 items-center gap-[4px] bg-white px-[4px]">
      <span className="h-[6px] w-[6px] rounded-full bg-[#2f7fd0] ring-1 ring-[#bcd8f0]" />
      <h2 className="flex-1">Oikema Engineering - Drawers Placement</h2>
      <button aria-label="Fermer">
        <svg viewBox="0 0 6 6" className="h-[6px] w-[6px]"><path d="m.5.5 5 5m0-5-5 5" stroke="#222" strokeWidth=".9" /></svg>
      </button>
    </div>
    <div className="flex min-h-0 flex-1">
      <DialogLeft />
      <DialogRight />
    </div>
  </div>
);

// ─── Catalogue browser ───
const CatalogPanel = () => (
  <aside className="flex w-[99px] shrink-0 flex-col border-l border-[#b4b8c0] bg-[#eef0f4] text-[#222]">
    <div className="flex h-[12px] items-center bg-gradient-to-b from-[#e6e9f0] to-[#d3d9e5] pl-[2px]">
      <h2 className="flex-1 whitespace-nowrap">Explorateur de Catalogue</h2>
      <button aria-label="Épingler le catalogue" className="w-[8px] text-gray-500">⊥</button>
      <button aria-label="Fermer le catalogue" className="w-[8px] text-gray-500">×</button>
    </div>
    <div className="flex h-[9px] items-center justify-between pl-[3px] whitespace-nowrap">
      {['Nou...', 'Ouvrir', 'Enr...', 'Fer...'].map((text) => (
        <button key={text} className="flex items-center gap-px">
          <Icon name="list" className="h-[6px] w-[6px]" />
          {text}
        </button>
      ))}
    </div>
    <div className="flex h-[9px] items-center bg-white">
      <button aria-label="Retour" className="w-[9px] bg-[#e8eaee] leading-[8px] text-gray-500">◂</button>
      <input placeholder="Chercher ..." aria-label="Chercher dans le catalogue" className="min-w-0 flex-1 px-[2px] outline-none" />
    </div>
    <div className="flex min-h-0 flex-1 overflow-hidden border border-r-0 border-[#b4b8c0] bg-white">
      <div className="grid flex-1 auto-rows-[35px] grid-cols-2 pt-[2px] pr-[4px]">
        {CATALOG.map(([icon, ...lines], i) => (
          <button key={i} className="flex min-w-0 flex-col items-center justify-start leading-[7px] whitespace-nowrap">
            <Icon name={icon} className="mb-px h-[16px] w-[16px]" />
            {lines.map((line) => (
              <span key={line}>{line}</span>
            ))}
          </button>
        ))}
      </div>
      <div className="w-[4px] bg-[#f0f0f0] pt-[62px]">
        <div className="h-[194px] bg-[#c9cbce]" />
      </div>
    </div>
    <div className="flex h-[11px] items-center gap-[5px] pl-[2px] whitespace-nowrap">
      <button className="h-full bg-white px-px">Oikema Eng</button>
      <button>Démarrage</button>
      <button>Tôlerie</button>
    </div>
  </aside>
);

// ─── Status bar ───
const STATUS_ICONS = ['glass', 'glass', 'goldBox', 'blueBox', 'move', 'blueBox', 'specs', 'wireBox', 'blueBox'];

const StatusBar = () => (
  <footer className="flex h-3 shrink-0 items-center border-t border-[#c4c8d0] bg-gradient-to-b from-[#dfe3ea] to-[#c6ccd8] whitespace-nowrap text-[#444]">
    <span className="flex-1">Prêt</span>
    <span className="mr-[8px] border-l border-[#aab] pl-[7px]">Taille de la vue: 1383 x&nbsp; 848</span>
    <span className="mr-[6px]">Unités: mm; deg</span>
    <div className="flex w-[133px] items-center justify-between">
      {STATUS_ICONS.map((name, i) => (
        <React.Fragment key={i}>
          <Icon name={name} className="h-[8px] w-[8px]" />
          {i > 0 && <span className="text-gray-500">▾</span>}
        </React.Fragment>
      ))}
    </div>
    <div className="flex w-[36px] items-center justify-between px-[2px]">
      <Icon name="cursor" className="h-[8px] w-[8px] opacity-50" />
      <span className="grid h-[10px] w-[10px] place-items-center border border-[#d8a83c] bg-[#fbd878]">
        <Icon name="cursor" className="h-[8px] w-[8px]" />
      </span>
      <Icon name="cursor" className="h-[7px] w-[7px]" />
    </div>
    <Select label="Filtre" value="N'importe" light className="w-[41px]" />
    <Select label="Configuration" value="Default" light className="w-[31px]" />
    <Icon name="net" className="h-[8px] w-[8px]" />
  </footer>
);

export default function App() {
  return (
    <div className="relative flex h-screen flex-col overflow-hidden bg-white font-['Lato','Liberation_Sans',sans-serif] text-[6px] leading-[8px]">
      <Ribbon />

      <div className="flex min-h-0 flex-1">
        <div className="flex min-w-0 flex-1 flex-col">
          <div className="flex h-[12px] shrink-0 items-end bg-gradient-to-b from-[#dfe2e8] to-[#f6f7f9]">
            <div className="flex h-[10px] w-[53px] items-center bg-white pl-[16px] [clip-path:polygon(8px_0,100%_0,100%_100%,0_100%)]">
              <span className="flex-1 font-bold">Scene56*</span>
              <button aria-label="Fermer Scene56" className="w-[9px] text-gray-500">×</button>
            </div>
            <span className="flex-1 pr-[3px] text-right text-gray-600">▾</span>
          </div>
          <div className="flex min-h-0 flex-1">
            <ScenePanel />
            <main className="relative ml-[3px] min-w-0 flex-1 bg-[#efefef]">
              <Viewport />
              <DrawersDialog />
              <p className="absolute bottom-[7px] left-[195px] font-['Liberation_Sans',sans-serif] text-[15px] leading-[18px] font-bold whitespace-nowrap text-[#a3a3a3]">
                Copyrights©: wood-it.be sprl - brussels - www.woodlab.eu
              </p>
            </main>
          </div>
        </div>
        <CatalogPanel />
      </div>

      <StatusBar />
      <div className="h-[2px] shrink-0 bg-white" />

      {/* Branding laid over the window */}
      <div className="pointer-events-none absolute top-0 right-0 z-20 h-[126px] w-[151px] bg-[#d69670]/75 [clip-path:polygon(0_0,100%_0,100%_100%)]" />
      <div className="pointer-events-none absolute bottom-0 left-0 z-20 h-[133px] w-[159px] bg-[#d69670]/75 [clip-path:polygon(0_0,100%_100%,0_100%)]" />
      <div className="absolute top-0 right-[6px] z-30 h-[61px] w-[62px] rounded-[5px] bg-[#0b3fd2] text-center font-['Open_Sans',sans-serif] text-[50px] leading-[60px] text-white">
        wl
      </div>
      <div className="absolute bottom-[4px] left-[8px] z-30 flex h-[63px] w-[64px] flex-col items-center rounded-[7px] border border-[#8f8f8f] bg-white pt-[11px] text-[8px] leading-[10px] font-bold text-[#333]">
        <Icon name="drawers" className="mb-[4px] h-[22px] w-[22px]" />
        Place Drawers
      </div>
    </div>
  );
}
